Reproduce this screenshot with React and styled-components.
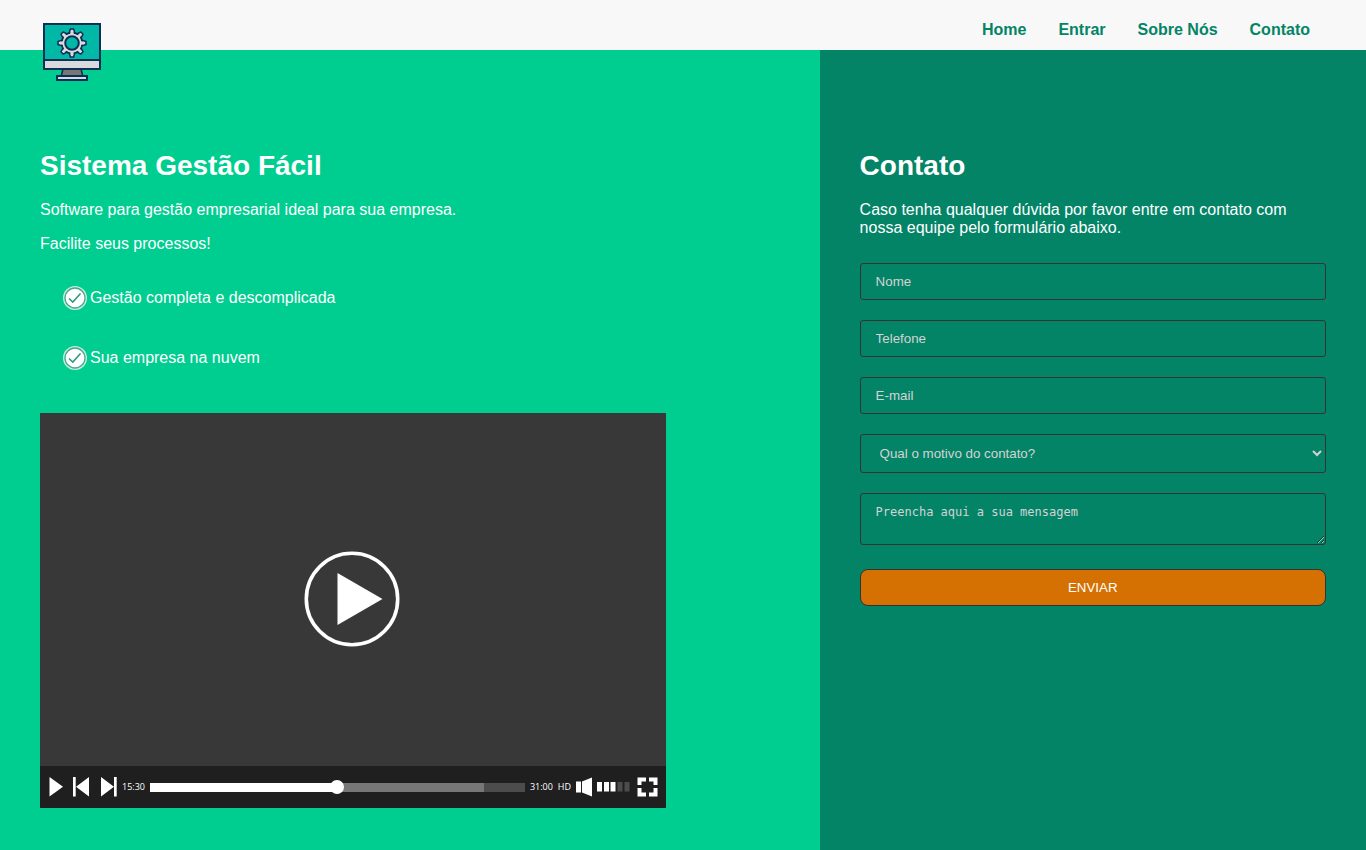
import React from "react";
import styled, { createGlobalStyle } from "styled-components";

const GlobalStyle = createGlobalStyle`
  * { box-sizing: border-box; margin: 0; padding: 0; }
  body {
    font-family: "Liberation Sans", Arial, sans-serif;
    font-size: 16px;
    line-height: 18px;
    color: #fff;
  }
`;

const Page = styled.div`
  min-height: 100vh;
  display: flex;
  flex-direction: column;
`;

const Header = styled.header`
  position: relative;
  height: 50px;
  padding: 0 40px;
  background: #f8f8f8;
  display: flex;
  justify-content: flex-end;
`;

const LogoLink = styled.a`
  position: absolute;
  top: 20px;
  left: 40px;
  width: 64px;
  height: 64px;
  svg { display: block; }
`;

const Nav = styled.nav`
  display: flex;
  padding-top: 5px;
`;

const NavLink = styled.a`
  padding: 16px;
  color: #038467;
  font-weight: bold;
  text-decoration: none;
`;

const Columns = styled.main`
  flex: 1;
  display: grid;
  grid-template-columns: 60% 40%;
`;

const Panel = styled.section`
  padding: 100px 40px 40px;
  background: ${(p) => p.$color};
`;

const Title = styled.h1`
  font-size: 28px;
  line-height: 32px;
  margin-bottom: 19px;
`;

const Text = styled.p`
  margin-bottom: 16px;
`;

const Features = styled.ul`
  list-style: none;
  padding-left: 22px;
  margin: -1px 0 25px;
`;

const Feature = styled.li`
  display: flex;
  align-items: center;
  gap: 2px;
  height: 60px;
`;

const Player = styled.figure`
  max-width: 626px;
  background: #383838;
  display: flex;
  flex-direction: column;
`;

const Screen = styled.div`
  height: 353px;
  padding: 19px 2px 0 0;
  display: flex;
  align-items: center;
  justify-content: center;
`;

const IconButton = styled.button`
  display: block;
  border: 0;
  background: none;
  cursor: pointer;
  svg { display: block; }
`;

const Controls = styled.div`
  height: 42px;
  padding: 0 8px;
  background: #1f1f1f;
  display: flex;
  align-items: center;
  font: 9px/20px "Open Sans", sans-serif;
`;

const Transport = styled.div`
  display: flex;
  gap: 8px;
  margin-right: 4px;
`;

const Track = styled.div`
  flex: 1;
  position: relative;
  height: 9px;
  margin: 0 5px;
  background: linear-gradient(to right, #fff 50%, #777 50% 89%, #4c4c4c 89%);
`;

const Knob = styled.span`
  position: absolute;
  left: 50%;
  top: 50%;
  width: 14px;
  height: 14px;
  border-radius: 50%;
  background: #fff;
  transform: translate(-50%, -50%);
`;

const Quality = styled.span`
  margin: 0 5px;
`;

const Form = styled.form`
  display: flex;
  flex-direction: column;
  gap: 20px;
  margin-top: 26px;
`;

const fieldStyle = `
  display: block;
  width: 100%;
  border: 1px solid #333;
  border-radius: 3px;
  background: #038467;
  color: #d3d3d3;
  &::placeholder { color: #d3d3d3; opacity: 1; }
`;

const Input = styled.input`
  ${fieldStyle}
  height: 37px;
  padding: 10px 15px;
  font-family: "Liberation Sans", Arial, sans-serif;
`;

const Select = styled.select`
  ${fieldStyle}
  height: 39px;
  padding: 10px 0 10px 15px;
  font-family: "Liberation Sans", Arial, sans-serif;
`;

const Message = styled.textarea`
  ${fieldStyle}
  height: 52px;
  padding: 11px 15px 9px;
  font: 12px/15px "DejaVu Sans Mono", monospace;
`;

const Submit = styled.button`
  height: 37px;
  margin-top: 4px;
  border: 1px solid #333;
  border-radius: 8px;
  background: #d47102;
  color: #fff;
  font-family: "Liberation Sans", Arial, sans-serif;
  cursor: pointer;
`;

const teeth = [0, 45, 90, 135, 180, 225, 270, 315];

function Logo() {
  return (
    <svg width="64" height="64" viewBox="0 0 64 64" aria-hidden="true">
      <path d="M23 49h18l2 8H21z" fill="#777" stroke="#0c2f55" strokeWidth="1.6" />
      <rect x="17" y="56" width="30" height="4" fill="#d9dade" stroke="#0c2f55" strokeWidth="2" />
      <rect x="4" y="4" width="56" height="45" fill="#d9dade" stroke="#0c2f55" strokeWidth="2" />
      <rect x="4" y="4" width="56" height="36" fill="#00b8a5" stroke="#0c2f55" strokeWidth="2" />
      <g fill="#d9dade" stroke="#0c2f55" strokeWidth="1.6" strokeLinejoin="round">
        {teeth.map((a) => (
          <path key={a} d="M29 14l1.400-5h3.200l1.400 5z" transform={`rotate(${a} 32 23)`} />
        ))}
        <circle cx="32" cy="23" r="10.4" />
      </g>
      <g fill="#d9dade">
        {teeth.map((a) => (
          <path key={a} d="M30 15l1-5h2l1 5z" transform={`rotate(${a} 32 23)`} />
        ))}
      </g>
      <circle cx="32" cy="23" r="6.8" fill="#00b8a5" stroke="#0c2f55" strokeWidth="2" />
    </svg>
  );
}

function Check() {
  return (
    <svg width="26" height="26" viewBox="0 0 26 26" aria-hidden="true">
      <circle cx="13" cy="13" r="12" fill="#c4efdf" />
      <circle cx="13" cy="13" r="10" fill="#fff" stroke="#4aa78b" strokeWidth="1.3" />
      <path d="M7 13.500l3.800 3.500 7.700-8.500" fill="none" stroke="#2d9c7c" strokeWidth="1.6" />
    </svg>
  );
}

function Field({ label, type }) {
  return <Input type={type} placeholder={label} aria-label={label} />;
}

function VideoPlayer() {
  return (
    <Player>
      <Screen>
        <IconButton aria-label="Assistir">
          <svg width="96" height="96" viewBox="0 0 96 96" fill="#fff">
            <circle cx="48" cy="48" r="45.700" fill="none" stroke="#fff" strokeWidth="3.6" />
            <path d="M33.500 22v52L78.500 48z" />
          </svg>
        </IconButton>
      </Screen>
      <Controls>
        <Transport>
          <IconButton aria-label="Reproduzir">
            <svg width="17" height="20" viewBox="0 0 17 20" fill="#fff"><path d="M1.500 0v19.500L15 9.700z" /></svg>
          </IconButton>
          <IconButton aria-label="Anterior">
            <svg width="17" height="20" viewBox="0 0 17 20" fill="#fff"><path d="M0 0h2.700v19.500H0zM16 0v19.500L3 9.700z" /></svg>
          </IconButton>
          <IconButton aria-label="Próximo">
            <svg width="20" height="20" viewBox="0 0 20 20" fill="#fff"><path d="M3 0v19.500L16 9.700zM16 0h2.700v19.500H16z" /></svg>
          </IconButton>
        </Transport>
        <span>15:30</span>
        <Track><Knob /></Track>
        <span>31:00</span>
        <Quality>HD</Quality>
        <IconButton aria-label="Volume">
          <svg width="56" height="20" viewBox="0 0 56 20" fill="#fff">
            <path d="M0 4.500h5v11H0zM6 4.500L16 .5v19L6 15.500z" />
            <path d="M21 5h5v9.500h-5zM28 5h5v9.500h-5zM34.500 5h5v9.500h-5z" />
            <path d="M41.500 5h5v9.500h-5zM48.500 5h5v9.500h-5z" fill="#4c4c4c" />
          </svg>
        </IconButton>
        <IconButton aria-label="Tela cheia">
          <svg width="26" height="20" viewBox="0 0 26 20" fill="none" stroke="#fff" strokeWidth="4">
            <path d="M7.500 8V2.500H14M17 2.500h6.500V8M23.500 11v6.500H17M14 17.500H7.500V11" />
          </svg>
        </IconButton>
      </Controls>
    </Player>
  );
}

export default function App() {
  return (
    <Page>
      <GlobalStyle />
      <Header>
        <LogoLink href="#home" aria-label="Sistema Gestão Fácil"><Logo /></LogoLink>
        <Nav>
          <NavLink href="#home">Home</NavLink>
          <NavLink href="#entrar">Entrar</NavLink>
          <NavLink href="#sobre">Sobre Nós</NavLink>
          <NavLink href="#contato">Contato</NavLink>
        </Nav>
      </Header>
      <Columns>
        <Panel $color="#00cd90">
          <Title>Sistema Gestão Fácil</Title>
          <Text>Software para gestão empresarial ideal para sua empresa.</Text>
          <Text>Facilite seus processos!</Text>
          <Features>
            <Feature><Check />Gestão completa e descomplicada</Feature>
            <Feature><Check />Sua empresa na nuvem</Feature>
          </Features>
          <VideoPlayer />
        </Panel>
        <Panel $color="#038467" id="contato">
          <Title as="h2">Contato</Title>
          <Text>Caso tenha qualquer dúvida por favor entre em contato com nossa equipe pelo formulário abaixo.</Text>
          <Form>
            <Field label="Nome" type="text" />
            <Field label="Telefone" type="tel" />
            <Field label="E-mail" type="email" />
            <Select defaultValue="" aria-label="Motivo do contato">
              <option value="">Qual o motivo do contato?</option>
              <option value="duvida">Dúvida</option>
              <option value="elogio">Elogio</option>
              <option value="reclamacao">Reclamação</option>
            </Select>
            <Message placeholder="Preencha aqui a sua mensagem" aria-label="Mensagem" />
            <Submit type="submit">ENVIAR</Submit>
          </Form>
        </Panel>
      </Columns>
    </Page>
  );
}
